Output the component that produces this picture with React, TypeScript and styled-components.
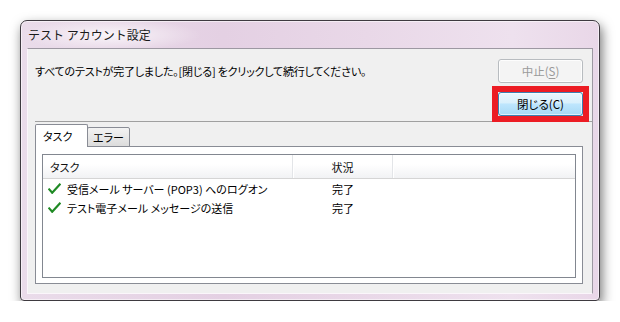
import styled, { createGlobalStyle } from "styled-components"

/** Global */
const GlobalStyle = createGlobalStyle`
  html, body {
    margin: 0;
    background: #ffffff;
  }
  body {
    font-family: "Noto Sans CJK JP", "Noto Sans", sans-serif;
    font-size: 11px;
    color: #000;
    font-feature-settings: "palt" 1;
  }
  * {
    box-sizing: border-box;
  }
`

/** Icons */
const Check = () => (
    <CheckIcon viewBox="0 0 13 11" width="13" height="11">
        <path d="M0.6 5.6 L4.2 9.8 L12.4 0.8" fill="none" stroke="#1f8a24" strokeWidth="2.1" strokeLinejoin="miter" />
    </CheckIcon>
)

/** Component */
const App = () => {
    return (
        <>
            <GlobalStyle />
            <Window>
                <TitleBar>テスト アカウント設定</TitleBar>
                <Client>
                    <MessageRow>
                        <Message>すべてのテストが完了しました。[閉じる] をクリックして続行してください。</Message>
                        <Button disabled>中止(<u>S</u>)</Button>
                    </MessageRow>
                    <CloseRow>
                        <Highlight>
                            <Button $primary>閉じる(C)</Button>
                        </Highlight>
                    </CloseRow>
                    <Separator />
                    <TabStrip>
                        <Tab $active $width={53}>タスク</Tab>
                        <Tab $width={43}>エラー</Tab>
                    </TabStrip>
                    <TabPanel>
                        <ListBox>
                            <HeaderRow>
                                <HeaderCell>タスク</HeaderCell>
                                <HeaderCell $center>状況</HeaderCell>
                                <HeaderCell $last />
                            </HeaderRow>
                            <Row>
                                <TaskCell><Check />受信メール サーバー (POP3) へのログオン</TaskCell>
                                <StatusCell>完了</StatusCell>
                            </Row>
                            <Row>
                                <TaskCell><Check />テスト電子メール メッセージの送信</TaskCell>
                                <StatusCell>完了</StatusCell>
                            </Row>
                        </ListBox>
                    </TabPanel>
                </Client>
            </Window>
        </>
    )
}

/** Styles */

const Window = styled.div`
    margin: 20px 0 0 20px;
    width: 580px;
    height: 281px;
    display: flex;
    flex-direction: column;
    padding: 0 6px 6px 6px;
    border: 1px solid #3e3a40;
    border-radius: 7px 7px 4px 4px;
    background:
        radial-gradient(ellipse 90px 16px at 90px 14px, rgba(255, 255, 255, 0.75), rgba(255, 255, 255, 0) 100%),
        linear-gradient(90deg, #eadcea 0%, #e4d0e3 35%, #e9d8e8 60%, #eee1ee 85%, #e9d7e8 100%);
    box-shadow: 2px 5px 12px rgba(0, 0, 0, 0.55), inset 0 0 0 1px rgba(255, 255, 255, 0.55);
`

const TitleBar = styled.div`
    height: 27px;
    display: flex;
    align-items: center;
    padding-left: 1px;
    color: #1a1a1a;
    font-size: 12px;
    font-feature-settings: normal;
`

const Client = styled.div`
    flex: 1;
    display: flex;
    flex-direction: column;
    background: #f0f0f0;
    border: 1px solid;
    border-color: #9d98a2 #9d98a2 #fbf6fb #fbf6fb;
    padding: 10px 9px 9px 7px;
`

const MessageRow = styled.div`
    display: flex;
    align-items: center;
    justify-content: space-between;
    height: 24px;
`

const Message = styled.span`
    font-size: 11px;
    letter-spacing: -0.2px;
    color: #000;
`

const Button = styled.button<{ $primary?: boolean }>`
    display: block;
    width: 85px;
    height: 24px;
    padding: 0;
    font-family: inherit;
    font-feature-settings: "palt" 1;
    font-size: 11.5px;
    border-radius: 3px;
    border: 1px solid ${props => props.$primary ? "#3c7fb1" : "#b8bcc0"};
    color: ${props => props.$primary ? "#000" : "#9a9a9a"};
    background: ${props => props.$primary
        ? "linear-gradient(#eaf6fd 0%, #d9f0fc 45%, #bee6fd 50%, #a7d9f5 100%)"
        : "#f4f4f4"};
    box-shadow: inset 0 0 0 1px ${props => props.$primary ? "rgba(255,255,255,0.6)" : "rgba(255,255,255,0.8)"};

    u {
        text-underline-offset: 2px;
    }
`

const CloseRow = styled.div`
    display: flex;
    justify-content: flex-end;
    margin-top: 3px;
`

const Highlight = styled.div`
    border: 6px solid #ec1c24;
    margin: 0 -6px -1px 0;
    position: relative;
    z-index: 2;
`

const Separator = styled.div`
    height: 1px;
    margin: 0 -9px 0 0;
    background: #a0a0a0;
`

const TabStrip = styled.div`
    display: flex;
    align-items: flex-end;
    margin-top: 3px;
    height: 22px;
    position: relative;
    z-index: 1;
    margin-bottom: -1px;
`

const Tab = styled.div<{ $active?: boolean; $width: number }>`
    width: ${props => props.$width}px;
    height: ${props => props.$active ? 23 : 20}px;
    padding: ${props => props.$active ? "3px 0 0 7px" : "1px 0 0 5px"};
    margin-left: ${props => props.$active ? 0 : -1}px;
    border: 1px solid #898c95;
    border-bottom: ${props => props.$active ? "none" : "1px solid #898c95"};
    border-radius: 2px 2px 0 0;
    background: ${props => props.$active ? "#ffffff" : "linear-gradient(#f3f3f3, #dcdcdc)"};
    font-size: 11px;
    line-height: 16px;
    position: relative;
    z-index: ${props => props.$active ? 2 : 1};
`

const TabPanel = styled.div`
    flex: 1;
    background: #ffffff;
    border: 1px solid #898c95;
    padding: 7px 6px 5px 6px;
    display: flex;
`

const ListBox = styled.div`
    flex: 1;
    border: 1px solid #828790;
    background: #ffffff;
`

const HeaderRow = styled.div`
    display: grid;
    grid-template-columns: 250px 100px 1fr;
    height: 24px;
    background: linear-gradient(#ffffff 0%, #ffffff 40%, #f1f2f4 100%);
    border-bottom: 1px solid #d5d5d5;
`

const HeaderCell = styled.div<{ $center?: boolean; $last?: boolean }>`
    display: flex;
    align-items: center;
    justify-content: ${props => props.$center ? "center" : "flex-start"};
    padding-left: ${props => props.$center ? 0 : 7}px;
    border-right: ${props => props.$last ? "none" : "1px solid #e3e5e8"};
    box-shadow: ${props => props.$last ? "none" : "1px 0 0 #ffffff"};
    color: #111;
    font-size: 11px;
`

const Row = styled.div`
    display: grid;
    grid-template-columns: 250px 100px 1fr;
    height: 19px;
    align-items: center;
`

const TaskCell = styled.div`
    display: flex;
    align-items: center;
    padding-left: 5px;
    white-space: nowrap;
`

const StatusCell = styled.div`
    text-align: center;
`

const CheckIcon = styled.svg`
    margin-right: 6px;
    flex-shrink: 0;
`

/** Exports */

export default App
